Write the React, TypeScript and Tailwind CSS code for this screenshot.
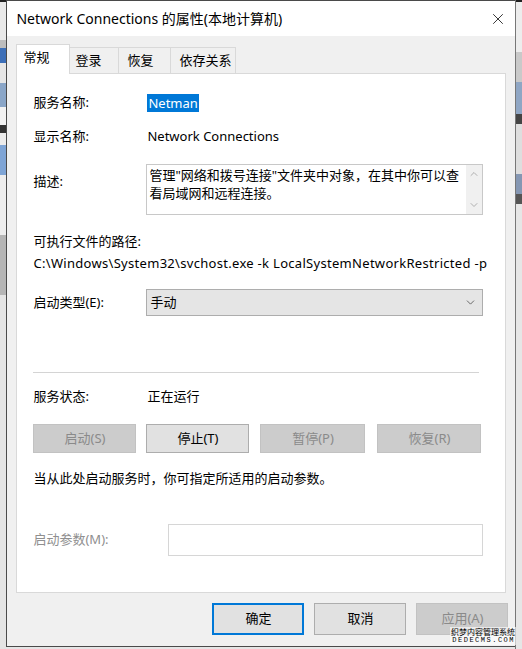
import { ChevronDown, ChevronUp, X } from "lucide-react";

const font = {
	fontFamily: '"Noto Sans", "Noto Sans CJK SC", sans-serif',
};

function GrayButton({
	label,
	disabled,
	className = "",
}: {
	label: string;
	disabled?: boolean;
	className?: string;
}) {
	return (
		<div
			className={
				"h-[29px] flex items-center justify-center border text-[13px] " +
				(disabled
					? "bg-[#cccccc] border-[#c2c2c2] text-[#8a8a8a] "
					: "bg-[#e1e1e1] border-[#adadad] text-black ") +
				className
			}
		>
			{label}
		</div>
	);
}

function SideStrips({ side }: { side: "left" | "right" }) {
	if (side === "left") {
		return (
			<div className="w-[7px] h-full flex flex-col bg-[#d6d6d6]">
				<div className="h-[2px] bg-[#222]" />
				<div className="h-[38px] bg-[#e9e9e9]" />
				<div className="h-[8px] bg-[#bdbdbd]" />
				<div className="h-[15px] bg-[#3d6fb8]" />
				<div className="h-[20px] bg-[#e6e6e6]" />
				<div className="h-[24px] bg-[#8aa6c8]" />
				<div className="h-[18px] bg-[#f2f2f2]" />
				<div className="h-[8px] bg-[#333]" />
				<div className="h-[12px] bg-[#ececec]" />
				<div className="h-[30px] bg-[#7fa5d6]" />
				<div className="h-[60px] bg-[#ededed]" />
				<div className="h-[60px] bg-[#b5b5b5]" />
				<div className="flex-1 bg-[#e4e4e4]" />
			</div>
		);
	}
	return (
		<div className="w-[7px] h-full flex flex-col bg-[#e2e2e2] border-l border-[#777]">
			<div className="h-[2px] bg-[#222]" />
			<div className="h-[50px] bg-[#ededed]" />
			<div className="h-[30px] bg-[#c9c9c9]" />
			<div className="h-[32px] bg-[#8fa6c4]" />
			<div className="h-[10px] bg-[#444]" />
			<div className="h-[50px] bg-[#dedede]" />
			<div className="h-[20px] bg-[#8597b3]" />
			<div className="h-[10px] bg-[#555]" />
			<div className="flex-1 bg-[#e6e6e6]" />
		</div>
	);
}

export default function App() {
	return (
		<div
			className="w-[522px] h-[649px] flex flex-row overflow-hidden bg-[#e5e5e5] relative text-black"
			style={font}
		>
			<SideStrips side="left" />
			<div className="flex-1 flex flex-col border-l border-b border-t border-[#4a4a4a] h-[647px] bg-[#f0f0f0]">
				{/* title bar */}
				<div className="h-[35px] bg-white flex flex-row items-center justify-between pl-[9px] pr-[8px]">
					<span className="text-[14px]">Network Connections 的属性(本地计算机)</span>
					<X size={18} strokeWidth={1.2} className="text-[#222]" />
				</div>

				<div className="flex flex-col px-[9px] pt-[8px] flex-1">
					{/* tabs */}
					<div className="flex flex-row items-end h-[29px] text-[13px]">
						<div className="relative z-10 h-[30px] w-[54px] bg-white border border-b-0 border-[#d9d9d9] flex items-start pt-[3px] pl-[6px] -mb-px">
							常规
						</div>
						<div className="h-[26px] w-[49px] bg-[#f0f0f0] border-t border-r border-[#d9d9d9] flex items-center pl-[5px]">
							登录
						</div>
						<div className="h-[26px] w-[52px] bg-[#f0f0f0] border-t border-r border-[#d9d9d9] flex items-center pl-[8px]">
							恢复
						</div>
						<div className="h-[26px] w-[65px] bg-[#f0f0f0] border-t border-r border-[#d9d9d9] flex items-center pl-[8px]">
							依存关系
						</div>
					</div>

					{/* panel */}
					<div className="bg-white border border-[#d9d9d9] h-[520px] w-[490px] pl-[16px] pr-[22px] flex flex-col text-[13px]">
						<div className="mt-[19px] grid grid-cols-[114px_1fr] items-center h-[20px]">
							<span>服务名称:</span>
							<span className="w-fit bg-[#0078d7] text-white px-[1px] leading-[18px]">Netman</span>
						</div>
						<div className="mt-[14px] grid grid-cols-[114px_1fr] items-center h-[20px]">
							<span>显示名称:</span>
							<span>Network Connections</span>
						</div>
						<div className="mt-[17px] grid grid-cols-[113px_1fr] items-start">
							<span className="mt-[8px]">描述:</span>
							<div className="h-[51px] border border-[#c8c8c8] flex flex-row">
								<div className="flex-1 pl-[2px] pt-[1px] leading-[18px]">
									管理"网络和拨号连接"文件夹中对象，在其中你可以查
									<br />
									看局域网和远程连接。
								</div>
								<div className="w-[16px] bg-[#f0f0f0] flex flex-col items-center justify-between py-[3px] text-[#9a9a9a]">
									<ChevronUp size={12} strokeWidth={1.5} />
									<ChevronDown size={12} strokeWidth={1.5} />
								</div>
							</div>
						</div>
						<div className="mt-[17px] h-[20px] flex items-center">可执行文件的路径:</div>
						<div className="mt-[2px] h-[20px] flex items-center whitespace-nowrap tracking-[0.3px]">
							C:\Windows\System32\svchost.exe -k LocalSystemNetworkRestricted -p
						</div>
						<div className="mt-[15px] grid grid-cols-[113px_1fr] items-center">
							<span>启动类型(E):</span>
							<div className="h-[27px] bg-[#e5e5e5] border border-[#adadad] flex flex-row items-center justify-between pl-[3px] pr-[5px]">
								<span>手动</span>
								<ChevronDown size={13} strokeWidth={1.4} className="text-[#444]" />
							</div>
						</div>
						<div className="mt-[56px] h-px bg-[#d4d4d4] mr-[4px]" />
						<div className="mt-[14px] grid grid-cols-[114px_1fr] items-center h-[20px]">
							<span>服务状态:</span>
							<span>正在运行</span>
						</div>
						<div className="mt-[17px] flex flex-row">
							<GrayButton label="启动(S)" disabled className="w-[103px]" />
							<GrayButton label="停止(T)" className="w-[103px] ml-[10px]" />
							<GrayButton label="暂停(P)" disabled className="w-[105px] ml-[11px]" />
							<GrayButton label="恢复(R)" disabled className="w-[104px] ml-[12px]" />
						</div>
						<div className="mt-[16px] h-[20px] flex items-center">
							当从此处启动服务时，你可指定所适用的启动参数。
						</div>
						<div className="mt-[35px] grid grid-cols-[135px_1fr] items-center">
							<span className="text-[#8f8f8f]">启动参数(M):</span>
							<div className="h-[32px] border border-[#d6d6d6] bg-white" />
						</div>
					</div>

					{/* dialog buttons */}
					<div className="flex flex-row justify-end gap-[10px] mt-[10px] mr-[-2px] text-[13px]">
						<div className="w-[92px] h-[32px] border-2 border-[#0078d7] bg-[#e1e1e1] flex items-center justify-center">
							确定
						</div>
						<div className="w-[92px] h-[32px] border border-[#adadad] bg-[#e1e1e1] flex items-center justify-center">
							取消
						</div>
						<div className="w-[92px] h-[32px] border border-[#c2c2c2] bg-[#cccccc] text-[#8a8a8a] flex items-center justify-center">
							应用(A)
						</div>
					</div>
				</div>
			</div>
			<SideStrips side="right" />

			{/* watermark */}
			<div className="absolute right-[6px] bottom-[4px] flex flex-col items-end leading-[9px] text-black bg-white/60 px-[1px]">
				<span className="text-[8px]" style={{ fontFamily: '"Noto Sans CJK SC", serif' }}>
					织梦内容管理系统
				</span>
				<span className="text-[7px] tracking-[1.5px]" style={{ fontFamily: '"Liberation Mono", monospace' }}>
					DEDECMS.COM
				</span>
			</div>
		</div>
	);
}
